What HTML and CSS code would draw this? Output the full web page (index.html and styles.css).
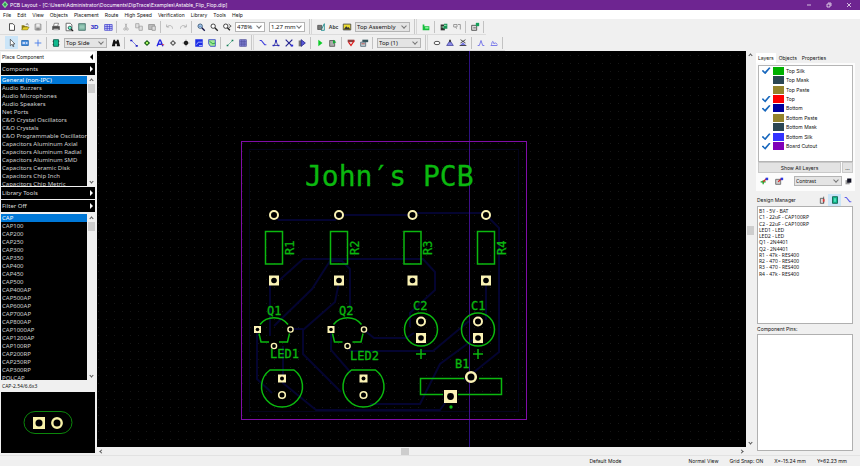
FILE: index.html
```
<!DOCTYPE html>
<html lang="en">
<head>
    <meta charset="utf-8">
    <title>PCB Layout</title>
    <link rel="stylesheet" href="styles.css">
</head>
<body>
<header class="titlebar">
    <svg class="logo" viewBox="0 0 10 10"><path d="M5 0 9 4.500 5 9 1 4.500z" fill="#8fdca0"/><path d="M5 2 7 4.500 5 7 3 4.500z" fill="#25a24b"/></svg>
    <h1>PCB Layout - [C:\Users\Administrator\Documents\DipTrace\Examples\Astable_Flip_Flop.dip]</h1>
    <div class="window-buttons">
        <button aria-label="Minimize"><svg viewBox="0 0 6 6"><path d="M1 3h4"/></svg></button>
        <button aria-label="Restore"><svg viewBox="0 0 6 6"><path d="M1 2h3v3h-3zM2 1h3v3"/></svg></button>
        <button aria-label="Close"><svg viewBox="0 0 6 6"><path d="M1 1 5 5M5 1 1 5"/></svg></button>
    </div>
</header>

<nav class="menu">
    <button>File</button>
    <button>Edit</button>
    <button>View</button>
    <button>Objects</button>
    <button>Placement</button>
    <button>Route</button>
    <button>High Speed</button>
    <button>Verification</button>
    <button>Library</button>
    <button>Tools</button>
    <button>Help</button>
</nav>

<div class="toolbars">
    <div class="toolbar">
        <button aria-label="New"><svg viewBox="0 0 12 12"><path d="M3 2h4l2 2v6H3z" fill="#fff" stroke="#333"/></svg></button>
        <button aria-label="Open"><svg viewBox="0 0 12 12"><path d="M2 9V4h3l1 1h3v4z" fill="#8a7a10"/><path d="M2 9.500 4 6h7l-2 3.500z" fill="#e6cf2a" stroke="#555410" stroke-width=".5"/><path d="M7 3l2-1 1 2" fill="none" stroke="#333" stroke-width=".7"/></svg></button>
        <button aria-label="Save"><svg viewBox="0 0 12 12"><path d="M2.500 2.500h7v7h-7z" fill="#c4c4c4" stroke="#8d8d8d"/><path d="M4 2.500h4v3H4z" fill="#eee"/><path d="M4 7h4v3H4z" fill="#888"/></svg></button>
        <span class="sep"></span>
        <button aria-label="Print"><svg viewBox="0 0 12 12"><path d="M4 1.500h5L8 5H3z" fill="#fff" stroke="#444" stroke-width=".7"/><path d="M1.500 5h9v4.500h-9z" fill="#4b4b4b"/><path d="M3 8h6v2H3z" fill="#bbb"/></svg></button>
        <button aria-label="Print preview"><svg viewBox="0 0 12 12"><path d="M2.500 1.500h5l2 2v7h-7z" fill="#fff" stroke="#555"/><circle cx="7" cy="7" r="2" fill="#6fc" stroke="#244"/><path d="m8.500 8.500 2.500 2.500" stroke="#111" stroke-width="1.300"/></svg></button>
        <button aria-label="Titles"><svg viewBox="0 0 12 12"><path d="M2 2h8v8H2z" fill="#7fb8a4" stroke="#44706a"/><path d="M3 5h6M3 7h6" stroke="#cfeee4" stroke-width=".6"/></svg></button>
        <button class="text-tool">3D</button>
        <button aria-label="Grid"><svg viewBox="0 0 12 12"><path d="M2 3h9v7H2zM2 5.300h9M2 7.600h9M5 3v7M8 3v7" fill="#d5d5fb" stroke="#3131c8" stroke-width=".8"/></svg></button>
        <span class="sep"></span>
        <button aria-label="Cut" disabled><svg viewBox="0 0 12 12" fill="none" stroke="#a9a9a9"><path d="M5 2 7 7M7 2 5 7"/><circle cx="4.500" cy="8.500" r="1.300"/><circle cx="7.500" cy="8.500" r="1.300"/></svg></button>
        <button aria-label="Copy" disabled><svg viewBox="0 0 12 12" fill="#e1e1e1" stroke="#a5a5a5"><path d="M2 2h4v5H2zM6 5h4v5H6z"/></svg></button>
        <button aria-label="Paste" disabled><svg viewBox="0 0 12 12" fill="#bbb" stroke="#969696"><path d="M2 3h7v6H2z"/><path d="M6 5h4v5H6z" fill="#ddd"/></svg></button>
        <span class="sep"></span>
        <button aria-label="Undo" disabled><svg viewBox="0 0 12 12" fill="none" stroke="#ababab"><path d="M2 3v3h3M2.500 6C5 3 9 4 9 8"/></svg></button>
        <button aria-label="Redo" disabled><svg viewBox="0 0 12 12" fill="none" stroke="#ababab"><path d="M10 3v3H7M9.500 6C7 3 3 4 3 8"/></svg></button>
        <span class="sep"></span>
        <button aria-label="Zoom window"><svg viewBox="0 0 12 12"><circle cx="5" cy="5" r="2.600" fill="#cfe6ff" stroke="#246"/><path d="m7 7 3.500 3.500" stroke="#114" stroke-width="1.600"/><path d="M3.500 5h3" stroke="#245fb0"/></svg></button>
        <button aria-label="Zoom board"><svg viewBox="0 0 12 12"><circle cx="5" cy="5" r="2.600" fill="#fff" stroke="#222"/><path d="m7 7 3.500 3.500" stroke="#222" stroke-width="1.600"/></svg></button>
        <button aria-label="Zoom all"><svg viewBox="0 0 12 12"><circle cx="4.500" cy="5" r="2.600" fill="#fff" stroke="#222"/><path d="m6.500 7 3 3" stroke="#222" stroke-width="1.600"/><path d="M8 2.500 11 5 8 7" fill="none" stroke="#444"/></svg></button>
        <span class="combo scale white"><select aria-label="Zoom"><option>478%</option></select></span>
        <span class="combo grid-size white"><select aria-label="Grid size"><option>1.27 mm</option></select></span>
        <span class="grip"></span>
        <button aria-label="Place pad"><svg viewBox="0 0 12 12"><path d="M2 4h5v5H2z" fill="#777" stroke="#333" stroke-width=".7"/><path d="M7 8 10 2v8H6" fill="none" stroke="#13888a"/></svg></button>
        <button class="text-tool tiny">Abc</button>
        <button aria-label="Picture"><svg viewBox="0 0 12 12"><path d="M1.500 2.500h9v7h-9z" fill="#eadb31" stroke="#444"/><path d="m2 9 3-4 2 2 1-1 2 3z" fill="#333"/></svg></button>
        <span class="combo assembly"><select aria-label="Assembly layer"><option>Top Assembly</option></select></span>
        <span class="grip"></span>
        <button aria-label="Show ratlines"><svg viewBox="0 0 12 12"><path d="M2 3h2v2h6v5H2z" fill="#16bd3d"/><path d="M5 6h4v2H5z" fill="#88f09a"/></svg></button>
        <span class="sep"></span>
        <button aria-label="Renew layout"><svg viewBox="0 0 12 12"><path d="M2 3h5v7H2z" fill="#333"/><path d="M6 2h4v6H5V5h1z" fill="#199557"/><path d="M3 6h3M6 4h3" stroke="#bfc"/></svg></button>
        <button aria-label="Related schematic"><svg viewBox="0 0 12 12" fill="none" stroke="#8b8b8b"><path d="M2 3h4v3H2zM7 3h3v6M4 6l2 2"/></svg></button>
        <span class="sep"></span>
        <button aria-label="Update pattern"><svg viewBox="0 0 12 12"><path d="M2 4h6v6H2z" fill="#ddd" stroke="#444"/><path d="M7 1h4v4H7z" fill="#14a05a"/><path d="M4 7h3" stroke="#555"/></svg></button>
        <span class="sep"></span>
    </div>
    <div class="toolbar">
        <button class="active" aria-label="Select"><svg viewBox="0 0 12 12"><path d="M4 1.500v8l2-2 1.300 3 1-.5L7 7.200h2.500z" fill="#fff" stroke="#222" stroke-width=".7"/></svg></button>
        <button aria-label="Place component"><svg viewBox="0 0 12 12"><path d="M2 3h8v6H2z" fill="#4c92e0" stroke="#2669b4"/><path d="M3 5h3v2H3zM7 5h2v2H7z" fill="#eef"/></svg></button>
        <button aria-label="Origin"><svg viewBox="0 0 12 12"><path d="M6 2v8M2 6h8" stroke="#3b73ea"/></svg></button>
        <span class="sep"></span>
        <button aria-label="Place pattern"><svg viewBox="0 0 12 12"><path d="M3 2h6v8H3z" fill="#11b98e" stroke="#0c5d4b"/><path d="M2 4h1M2 8h1M9 4h1M9 8h1" stroke="#222"/></svg></button>
        <span class="combo side"><select aria-label="Board side"><option>Top Side</option></select></span>
        <button aria-label="Find"><svg viewBox="0 0 12 12" fill="#111"><path d="M3 2h2v2h2V2h2l2 8H7V7H5v3H1z"/></svg></button>
        <span class="sep"></span>
        <button aria-label="Route trace"><svg viewBox="0 0 12 12"><path d="m3 3 6 6" stroke="#6a6ae8"/><path d="M1.500 2h2.500v2H1.500zM8 8.500h2.500v2H8z" fill="#1f1fc0"/></svg></button>
        <button aria-label="Pad"><svg viewBox="0 0 12 12"><path d="M6 2.300 9.700 6 6 9.700 2.300 6z" fill="#145a18"/><circle cx="6" cy="6" r="1.500" fill="#a6f25c"/></svg></button>
        <button aria-label="Text"><svg viewBox="0 0 12 12"><path d="m2.500 10 3-7.500h1l3 7.500M4 7.500h5" fill="none" stroke="#2727e4" stroke-width="1.700"/><path d="M8 8h3" stroke="#d33"/></svg></button>
        <button aria-label="Via"><svg viewBox="0 0 12 12"><path d="M6 2.300 9.700 6 6 9.700 2.300 6z" fill="#555"/><circle cx="6" cy="6" r="1.500" fill="#ddd"/></svg></button>
        <button aria-label="Hole"><svg viewBox="0 0 12 12"><circle cx="6" cy="6" r="2.600" fill="#111"/><path d="M6 2v8M2 6h8" stroke="#333" stroke-width=".6"/></svg></button>
        <button aria-label="Copper pour"><svg viewBox="0 0 12 12"><path d="M1.500 1.500h9v9h-9z" fill="#1c2ce6"/><path d="m3 8 2-3h5M6 9h4" fill="none" stroke="#b9c4ff"/></svg></button>
        <button aria-label="Board outline"><svg viewBox="0 0 12 12"><path d="M2 2h8v8H4L2 7z" fill="#9fe894" stroke="#3543cb"/><path d="m3 4 4 3 3-1" fill="none" stroke="#139b38"/></svg></button>
        <span class="sep"></span>
        <button aria-label="Measure"><svg viewBox="0 0 12 12"><path d="m3 9 6-6" stroke="#6ab898"/><path d="M2 8h2v2H2zM8 2h2v2H8z" fill="#0d7b53"/></svg></button>
        <button aria-label="Table"><svg viewBox="0 0 12 12"><path d="M2 2h8v8H2zM2 4.600h8M2 7.300h8M4.600 2v8M7.300 2v8" fill="#8c8ce0" stroke="#41418f" stroke-width=".8"/></svg></button>
        <span class="grip"></span>
        <button aria-label="Manual route"><svg viewBox="0 0 12 12"><path d="M2 3h2l4 5h2" fill="none" stroke="#4040dd" stroke-width="1.300"/></svg></button>
        <button aria-label="Edit traces"><svg viewBox="0 0 12 12"><path d="M2 9h8M6 3 4 9M6 3l2 6" stroke="#3030a0"/><path d="M5 2h2v3H5zM2 8h2v2H2zM8 8h2v2H8z" fill="#2525bb"/></svg></button>
        <button aria-label="Unroute"><svg viewBox="0 0 12 12"><path d="m2 2 8 8M2 10l8-8" stroke="#24248f" stroke-width="1.400"/><path d="M8 8h3v2H8z" fill="#2c2cda"/></svg></button>
        <button aria-label="Fanout"><svg viewBox="0 0 12 12"><path d="M2 3h4v7H2z" fill="#777"/><path d="M5 2 10 6 5 10z" fill="#5757db" stroke="#25258c"/></svg></button>
        <span class="sep"></span>
        <button aria-label="Run autorouter"><svg viewBox="0 0 12 12"><path d="M4 2v8l5-4z" fill="#0dcc29"/></svg></button>
        <button aria-label="Route setup"><svg viewBox="0 0 12 12"><path d="M2 3h6v7H2z" fill="#aaa" stroke="#555"/><path d="m6 2 4 3-4 2z" fill="#15a936"/></svg></button>
        <span class="sep"></span>
        <button aria-label="Check design rules"><svg viewBox="0 0 12 12"><path d="M2 2h8v3H2z" fill="#8c4040"/><path d="m3 5 3 4 4-6" fill="none" stroke="#df1717" stroke-width="1.500"/></svg></button>
        <button aria-label="DRC setup"><svg viewBox="0 0 12 12"><path d="M4 2h7v3H4z" fill="#36555b"/><path d="M2 5h6v5H2z" fill="#bfd7d8" stroke="#567"/><path d="M3 7h4" stroke="#b33"/></svg></button>
        <span class="sep"></span>
        <span class="combo layer"><select aria-label="Current layer"><option>Top (1)</option></select></span>
        <span class="grip"></span>
        <button aria-label="Ellipse"><svg viewBox="0 0 12 12"><ellipse cx="6" cy="6" rx="3.500" ry="2" fill="#fff" stroke="#333"/></svg></button>
        <button aria-label="Phase tune"><svg viewBox="0 0 12 12"><path d="M2 9h8L6 3z" fill="#8b8be8" stroke="#33338f" stroke-width=".8"/><path d="M5 2h2v3H5z" fill="#333"/></svg></button>
        <button aria-label="Unlink pairs"><svg viewBox="0 0 12 12"><path d="M2 9h8L6 5z" fill="#7777e0"/><path d="m3 2 6 4M9 2 3 6M2 9h8" stroke="#333"/></svg></button>
        <span class="sep"></span>
        <button aria-label="Meander"><svg viewBox="0 0 12 12"><path d="M2 9h2l2-6 2 6h2" fill="none" stroke="#6464e8"/></svg></button>
        <button aria-label="Meander pair"><svg viewBox="0 0 12 12"><path d="M2 9h8M3 8c1-5 2-5 3-1 1-2 3-1 4 1" fill="none" stroke="#6464e8"/></svg></button>
        <span class="sep"></span>
    </div>
</div>

<main class="workspace">
    <aside class="library">
        <button class="panel-title">Place Component <i class="arrow left"></i></button>
        <button class="bar">Components <i class="arrow right"></i></button>
        <div class="listbox groups">
            <ul>
                <li class="selected">General (non-IPC)</li>
                <li>Audio Buzzers</li>
                <li>Audio Microphones</li>
                <li>Audio Speakers</li>
                <li>Net Ports</li>
                <li>C&amp;O Crystal Oscillators</li>
                <li>C&amp;O Crystals</li>
                <li>C&amp;O Programmable Oscillators</li>
                <li>Capacitors Aluminum Axial</li>
                <li>Capacitors Aluminum Radial</li>
                <li>Capacitors Aluminum SMD</li>
                <li>Capacitors Ceramic Disk</li>
                <li>Capacitors Chip Inch</li>
                <li>Capacitors Chip Metric</li>
            </ul>
            <div class="scroll"><i class="chev up"></i><i class="thumb"></i><i class="chev down"></i></div>
        </div>
        <button class="bar">Library Tools <i class="arrow right"></i></button>
        <button class="bar">Filter Off <i class="arrow right"></i></button>
        <div class="listbox parts">
            <ul>
                <li class="selected">CAP</li>
                <li>CAP100</li>
                <li>CAP200</li>
                <li>CAP250</li>
                <li>CAP300</li>
                <li>CAP350</li>
                <li>CAP400</li>
                <li>CAP450</li>
                <li>CAP500</li>
                <li>CAP400AP</li>
                <li>CAP500AP</li>
                <li>CAP600AP</li>
                <li>CAP700AP</li>
                <li>CAP800AP</li>
                <li>CAP1000AP</li>
                <li>CAP1200AP</li>
                <li>CAP100RP</li>
                <li>CAP200RP</li>
                <li>CAP250RP</li>
                <li>CAP300RP</li>
                <li>POLCAP</li>
            </ul>
            <div class="scroll"><i class="chev up"></i><i class="thumb"></i><i class="chev down"></i></div>
        </div>
        <p class="part-name">CAP-2.54/6.6x3</p>
        <svg class="preview" viewBox="0 0 92 61">
            <rect x="22" y="19.500" width="48" height="22" rx="11" fill="none" stroke="#0b860b"/>
            <path d="M31 25h12v12H31z" fill="#f8f2a8"/>
            <circle cx="37" cy="31" r="3.500"/>
            <circle cx="55" cy="31" r="4.700" fill="#000" stroke="#f8f2a8" stroke-width="2.400"/>
        </svg>
    </aside>

    <section class="design">
        <svg class="board" viewBox="97 51 649 396" preserveAspectRatio="xMidYMid slice">
            <defs>
                <pattern id="dots" x="98" y="55" width="8" height="8" patternUnits="userSpaceOnUse"><path d="M0 0h1v1H0z" fill="#161616"/></pattern>
                <g id="round"><circle r="4" fill="#000" stroke="#fbf3b5" stroke-width="2"/></g>
                <g id="square"><path d="M-5-5H5V5H-5z" fill="#fbf3b5"/><circle r="2.800"/></g>
                <g id="small-round"><circle r="2.600" fill="#000" stroke="#fbf3b5" stroke-width="1.400"/></g>
                <g id="small-square"><path d="M-3.500-3.500h7v7h-7z" fill="#fbf3b5"/><circle r="1.800"/></g>
                <g id="resistor">
                    <rect x="-8.500" y="16.500" width="17" height="32.500" class="silk"/>
                    <use href="#round"/>
                    <use href="#square" y="65.500"/>
                </g>
                <g id="transistor">
                    <path class="silk" d="M-14-5C-7-14 7-14 14-5M-15 4l2 8.500h8M5 12.500h8.500l2-8.500"/>
                    <use href="#small-square" x="-16.500"/>
                    <use href="#small-round" x="16.500"/>
                    <use href="#small-round" y="16.500"/>
                </g>
                <g id="capacitor">
                    <circle r="16.500" class="silk"/>
                    <use href="#round" y="-8"/>
                    <use href="#square" y="8.500"/>
                    <path class="silk" d="M-5 24.500H5M0 19.500v10"/>
                </g>
                <g id="led">
                    <path class="silk" d="M-12-17H12A20.500 20.500 0 1 1-12-17z"/>
                    <path d="M-4-12.500h8v8h-8z" fill="#fbf3b5"/><circle cy="-8.500" r="2"/>
                    <circle cy="8" r="3.300" fill="#000" stroke="#fbf3b5" stroke-width="1.600"/>
                </g>
            </defs>
            <rect x="97" y="51" width="649" height="396"/>
            <rect x="97" y="51" width="649" height="396" fill="url(#dots)"/>
            <rect x="249.500" y="149.500" width="269" height="262" fill="none" stroke="#03031c"/>
            <g class="trace">
                <path d="M274 215l5 5h56l4-5h73l3-2h71M486 215l13 13v124l-35 28"/>
                <path d="M274 285l29-26h120l12 13v18l-25 23v14M274 326l38-37 18-28h12l8 8v40"/>
                <path d="M270 282v54M339 282l-4 20-32 28v24l38 38M290 329h13"/>
                <path d="M364 330l10 8h32l8-5M331 330v20l20 23M347 346l4 5h82l36-30"/>
                <path d="M257 330v49l15 14M283 346v37l33 27h124l10-14M370 404h50l20-40 38-28M486 282v38"/>
            </g>
            <path d="M469.500 51v396" stroke="#2d1180"/>
            <path d="M469.500 142v277" stroke="#3f0f88"/>
            <rect x="241.500" y="141.500" width="285" height="278" fill="none" stroke="#800da8"/>
            <use href="#resistor" x="274" y="215"/>
            <use href="#resistor" x="339" y="215"/>
            <use href="#resistor" x="412.500" y="215"/>
            <use href="#resistor" x="486" y="215"/>
            <use href="#transistor" x="274" y="329.500"/>
            <use href="#transistor" x="347.500" y="329.500"/>
            <use href="#capacitor" x="421" y="329.500"/>
            <use href="#capacitor" x="478" y="329.500"/>
            <use href="#led" x="282" y="387"/>
            <use href="#led" x="363.500" y="387"/>
            <path class="silk" d="M464 378.500h-43.500v16H443M458 394.500h43.500v-16H479"/>
            <circle cx="471" cy="377" r="4.800" fill="#000" stroke="#fbf3b5" stroke-width="2.600"/>
            <path d="M444 390h13v13h-13z" fill="#fbf3b5"/><circle cx="450.500" cy="396.500" r="3.400"/>
            <circle cx="451" cy="407" r="1.700" fill="#0bb80f"/>
            <g class="names">
                <text class="big" x="305" y="186">John′s PCB</text>
                <text transform="translate(294 255) rotate(-90)">R1</text>
                <text transform="translate(359 255) rotate(-90)">R2</text>
                <text transform="translate(432 255) rotate(-90)">R3</text>
                <text transform="translate(506 255) rotate(-90)">R4</text>
                <text x="267" y="315">Q1</text>
                <text x="339" y="315">Q2</text>
                <text x="413" y="310">C2</text>
                <text x="471" y="310">C1</text>
                <text x="270" y="358">LED1</text>
                <text x="350" y="360">LED2</text>
                <text x="455" y="368">B1</text>
            </g>
        </svg>
        <div class="scroll tall"><i class="chev up"></i><i class="thumb"></i><i class="chev down"></i></div>
        <div class="scroll wide"><i class="chev left"></i><i class="thumb"></i><i class="chev right"></i></div>
    </section>

    <aside class="manager">
        <div class="tabs">
            <button class="current">Layers</button>
            <button>Objects</button>
            <button>Properties</button>
        </div>
        <div class="layers">
            <div class="layer-box">
                <ul>
                    <li><label><input type="checkbox" checked><i class="silk-top"></i>Top Silk</label></li>
                    <li><label><input type="checkbox"><i class="mask"></i>Top Mask</label></li>
                    <li><label><input type="checkbox"><i class="paste"></i>Top Paste</label></li>
                    <li><label><input type="checkbox" checked><i class="top"></i>Top</label></li>
                    <li><label><input type="checkbox" checked><i class="bottom"></i>Bottom</label></li>
                    <li><label><input type="checkbox"><i class="paste"></i>Bottom Paste</label></li>
                    <li><label><input type="checkbox"><i class="mask"></i>Bottom Mask</label></li>
                    <li><label><input type="checkbox" checked><i class="silk-bottom"></i>Bottom Silk</label></li>
                    <li><label><input type="checkbox" checked><i class="cutout"></i>Board Cutout</label></li>
                </ul>
            </div>
            <div class="layer-buttons">
                <button class="show-all">Show All Layers</button>
                <button class="more">...</button>
            </div>
            <div class="layer-tools">
                <button aria-label="Add layer"><svg viewBox="0 0 12 12"><path d="M2 7h6M5 5v5" stroke="#16a022" stroke-width="1.500"/><path d="m5 7 4-4" stroke="#d22" stroke-width="1.500"/><path d="M8 2h3v3H8z" fill="#2b3be0"/></svg></button>
                <button aria-label="Layer setup"><svg viewBox="0 0 12 12"><path d="M2 4h6v6H2z" fill="#ccc" stroke="#666"/><path d="m5 7 4-4" stroke="#d22" stroke-width="1.500"/><path d="M8 2h3v3H8z" fill="#2b3be0"/></svg></button>
                <span class="combo contrast"><select aria-label="Display mode"><option>Contrast</option></select></span>
                <button class="swap" aria-label="Flip board"><svg viewBox="0 0 12 12"><path d="M3 5h5v5H3z" fill="#999"/><path d="M5 3h5v5H5z" fill="#112"/></svg></button>
            </div>
        </div>
        <div class="manager-head">
            <h2>Design Manager</h2>
            <button aria-label="Sort"><svg viewBox="0 0 12 12"><path d="M4 4h4v6H4zM8 2v8" fill="#ddd" stroke="#555"/><path d="M7 5h2v3H7z" fill="#e33"/></svg></button>
            <button class="active" aria-label="Components"><svg viewBox="0 0 12 12"><path d="M3 2h6v8H3z" fill="#11b98e" stroke="#0c5d4b"/><path d="M5 4h2v4H5z" fill="#5be8c4"/></svg></button>
            <button aria-label="Nets"><svg viewBox="0 0 12 12"><path d="M2 3h2l4 5h2" fill="none" stroke="#6060ee" stroke-width="1.300"/></svg></button>
        </div>
        <div class="box components">
            <ul>
                <li>B1 - 5V - BAT</li>
                <li>C1 - 22uF - CAP100RP</li>
                <li>C2 - 22uF - CAP100RP</li>
                <li>LED1 - LED</li>
                <li>LED2 - LED</li>
                <li>Q1 - 2N4401</li>
                <li>Q2 - 2N4401</li>
                <li>R1 - 47k - RES400</li>
                <li>R2 - 470 - RES400</li>
                <li>R3 - 470 - RES400</li>
                <li>R4 - 47k - RES400</li>
            </ul>
        </div>
        <h2 class="pins-head">Component Pins:</h2>
        <div class="box pins"></div>
    </aside>
</main>

<footer class="status">
    <span class="mode">Default Mode</span>
    <span class="view">Normal View</span>
    <span class="snap">Grid Snap: ON</span>
    <span class="pos-x">X=-15.24 mm</span>
    <span class="pos-y">Y=62.23 mm</span>
</footer>
</body>
</html>
```

FILE: styles.css
```
* {
  box-sizing: border-box;
}

body {
  display: flex;
  flex-direction: column;
  height: 100vh;
  margin: 0;
  overflow: hidden;
  background-color: #f0f0f0;
  color: #111;
  font-family: Inter, "Open Sans", sans-serif;
  font-size: 5px;
  line-height: 8px;
}

button, select, input {
  margin: 0;
  padding: 0;
  border: none;
  background: none;
  color: inherit;
  font: inherit;
}

h1, h2, p, ul {
  margin: 0;
  padding: 0;
  font-size: inherit;
  font-weight: normal;
  list-style: none;
}

svg {
  display: block;
}

/* title and menu */
.titlebar {
  display: flex;
  align-items: center;
  flex: 0 0 10px;
  padding-left: 1px;
  background-color: #6e2591;
  color: #fff;
}

.logo {
  width: 8px;
  height: 8px;
  margin-right: 1px;
}

.window-buttons {
  display: flex;
  gap: 14px;
  margin-left: auto;
  padding-right: 8px;
}

.window-buttons svg {
  width: 6px;
  height: 6px;
  fill: none;
  stroke: #fff;
  stroke-width: 0.7;
}

.menu {
  display: flex;
  flex: 0 0 9px;
  gap: 6px;
  padding: 1px 3px 0;
  background-color: #fff;
}

/* toolbars */
.toolbars {
  flex: 0 0 32px;
}

.toolbar {
  display: flex;
  align-items: center;
  width: fit-content;
  height: 16px;
  padding-left: 5px;
  border-bottom: 1px solid #dcdcdc;
}

.toolbar button {
  display: flex;
  align-items: center;
  justify-content: center;
  width: 13px;
  height: 13px;
}

.toolbar svg, .manager button svg {
  width: 10px;
  height: 10px;
}

.toolbar .active, .manager-head .active {
  background-color: #cbe5f8;
}

.toolbar .text-tool {
  color: #2222c4;
  font-family: "Liberation Sans", sans-serif;
  font-size: 6px;
  font-weight: bold;
}

.toolbar .tiny {
  color: #333;
  font-size: 5px;
}

.sep {
  width: 1px;
  height: 12px;
  margin: 0 2px;
  background-color: #c2c2c2;
}

.grip {
  width: 3px;
  height: 15px;
  margin: 0 2px;
  border-left: 1px solid #c8c8c8;
  border-right: 1px solid #d6d6d6;
}

.combo {
  display: grid;
  align-items: center;
  height: 10px;
  margin: 0 2px;
  border: 1px solid #b4b4b4;
  background-color: #e4e4e4;
}

.combo.white {
  background-color: #fff;
}

.combo select {
  grid-area: 1 / 1;
  width: 100%;
  height: 8px;
  padding-left: 1px;
  appearance: none;
  font-family: "Noto Sans", sans-serif;
  font-size: 6px;
  line-height: 8px;
}

.combo::after {
  content: "";
  grid-area: 1 / 1;
  justify-self: end;
  width: 3px;
  height: 3px;
  margin: 0 3px 2px 0;
  border-right: 1px solid #777;
  border-bottom: 1px solid #777;
  transform: rotate(45deg);
  pointer-events: none;
}

.scale {
  width: 30px;
}

.grid-size {
  width: 36px;
}

.assembly {
  width: 55px;
}

.side {
  width: 43px;
}

.layer {
  width: 44px;
}

/* work area */
.workspace {
  display: grid;
  flex: 1;
  grid-template-columns: 97px 1fr 106px;
  min-height: 0;
}

.library {
  display: flex;
  flex-direction: column;
  gap: 1px;
  min-height: 0;
  padding: 1px 2px 2px 1px;
  font-family: "Noto Sans", sans-serif;
  font-size: 6px;
}

.panel-title, .bar {
  display: flex;
  flex: 0 0 12px;
  align-items: center;
  justify-content: space-between;
  padding: 0 2px 0 1px;
}

.panel-title {
  flex-basis: 10px;
  background-color: #fff;
  font-family: Inter, sans-serif;
  font-size: 5px;
}

.bar {
  background-color: #000;
  color: #dcdcdc;
}

.arrow {
  border: 3px solid transparent;
}

.arrow.left {
  border-right-color: #000;
  border-left-width: 0;
}

.arrow.right {
  border-left-color: #fff;
  border-right-width: 0;
}

.listbox {
  display: flex;
  min-height: 0;
  background-color: #000;
  color: #d0d0d0;
  overflow: hidden;
}

.groups {
  flex: 2 1 0;
}

.parts {
  flex: 3 1 0;
  margin-top: 1px;
}

.listbox ul {
  flex: 1;
  min-width: 0;
}

.listbox li {
  height: 8px;
  padding-left: 1px;
  overflow: hidden;
  white-space: nowrap;
}

.listbox .selected {
  background-color: #0078d7;
  color: #fff;
}

.scroll {
  display: flex;
  flex-direction: column;
  align-items: center;
  width: 8px;
  padding: 3px 0;
  background-color: #f0f0f0;
}

.scroll .thumb {
  width: 7px;
  height: 9px;
  background-color: #cdcdcd;
}

.chev {
  width: 3px;
  height: 3px;
  border-top: 1px solid #555;
  border-left: 1px solid #555;
  transform: rotate(45deg);
}

.chev.down {
  margin-top: auto;
  transform: rotate(225deg);
}

.chev.left {
  transform: rotate(-45deg);
}

.chev.right {
  transform: rotate(135deg);
}

.listbox .thumb {
  margin-top: 2px;
}

.part-name {
  flex: 0 0 10px;
  padding-left: 1px;
  font-size: 5px;
  line-height: 10px;
}

.preview {
  flex: 0 0 61px;
  width: 100%;
  background-color: #000;
}

.design {
  display: grid;
  grid-template-columns: 1fr 8px;
  grid-template-rows: 1fr 8px;
  min-width: 0;
  min-height: 0;
}

.board {
  width: 100%;
  height: 100%;
  min-height: 0;
  background-color: #000;
}

.scroll.tall {
  display: grid;
  grid-template-rows: 3px 9fr 9px 11fr 3px;
  justify-items: center;
}

.tall .thumb {
  grid-row: 3;
}

.tall .chev.down {
  grid-row: 5;
}

.scroll.wide {
  display: grid;
  grid-template-columns: 3px 9fr 8px 10fr 3px;
  width: auto;
  padding: 0 3px;
}

.wide .thumb {
  grid-column: 3;
  width: 8px;
  height: 7px;
}

.wide .chev.right {
  grid-column: 5;
}

.board .silk {
  fill: none;
  stroke: #0bb80f;
  stroke-width: 1.5;
}

.trace path {
  fill: none;
  stroke: #040430;
  stroke-width: 2;
}

.names text {
  fill: #0bb80f;
  stroke: #0bb80f;
  stroke-width: 0.3;
  font-family: "DejaVu Sans Mono", monospace;
  font-size: 12px;
}

.names .big {
  font-size: 28px;
}

/* right side panels */
.manager {
  display: flex;
  flex-direction: column;
  min-height: 0;
  padding: 2px 5px 4px 2px;
}

.tabs {
  display: flex;
  flex: 0 0 10px;
  gap: 1px;
}

.tabs button {
  padding: 0 2px;
}

.tabs .current {
  background-color: #fff;
}

.layers {
  padding: 2px;
  background-color: #fcfcfc;
}

.layer-box {
  height: 97px;
  border: 1px solid #b5b5b5;
  background-color: #fff;
}

.layer-box ul {
  display: grid;
  grid-auto-rows: 1fr;
  height: 85px;
}

.layer-box label {
  display: grid;
  grid-template-columns: 12px 12px 1fr;
  align-items: center;
  height: 100%;
  padding-left: 1px;
  column-gap: 1px;
}

.layer-box input {
  display: grid;
  place-items: center;
  height: 8px;
  appearance: none;
}

.layer-box input:checked::before {
  content: "";
  width: 9px;
  height: 7px;
  background-color: #1767bd;
  clip-path: polygon(0 50%, 18% 38%, 38% 66%, 85% 0, 100% 10%, 42% 100%);
}

.layer-box i {
  width: 11px;
  height: 8px;
}

.silk-top {
  background-color: #00b000;
}

.mask {
  background-color: #2b4653;
}

.paste {
  background-color: #94842c;
}

.top {
  background-color: #ff0000;
}

.bottom {
  background-color: #0000a0;
}

.silk-bottom {
  background-color: #3333ff;
}

.cutout {
  background-color: #8000b8;
}

.layer-buttons {
  display: flex;
  gap: 1px;
}

.layer-buttons button {
  height: 11px;
  border: 1px solid #c9c9c9;
  background-color: #e3e3e3;
}

.show-all {
  flex: 1;
}

.more {
  width: 11px;
}

.layer-tools {
  display: flex;
  align-items: center;
  height: 16px;
  padding-left: 1px;
}

.layer-tools button {
  margin-right: 5px;
}

.layer-tools .contrast {
  flex: 1;
  margin: 0 1px 0 5px;
}

.layer-tools .swap {
  margin-right: 0;
}

.layer-tools .contrast select {
  font-size: 5px;
}

.manager-head {
  display: flex;
  align-items: center;
  flex: 0 0 13px;
  margin-top: 2px;
  padding: 0 1px;
}

.manager-head h2 {
  flex: 1;
}

.manager-head button {
  display: grid;
  place-items: center;
  width: 13px;
  height: 12px;
}

.box {
  margin: 0 2px 0 1px;
  border: 1px solid #b0b0b0;
  background-color: #fff;
}

.components {
  flex: 0 0 118px;
  padding: 1px;
  font-family: "Noto Sans", sans-serif;
}

.components ul {
  display: grid;
  grid-auto-rows: 1fr;
  height: 69px;
  line-height: 6px;
}

.pins-head {
  flex: 0 0 10px;
  padding-left: 1px;
  line-height: 10px;
}

.pins {
  flex: 1;
}

/* status bar */
.status {
  display: flex;
  align-items: center;
  flex: 0 0 11px;
  gap: 11px;
  padding-right: 13px;
  border-top: 1px solid #e2e2e2;
}

.mode {
  margin-left: auto;
  margin-right: 56px;
}
```
